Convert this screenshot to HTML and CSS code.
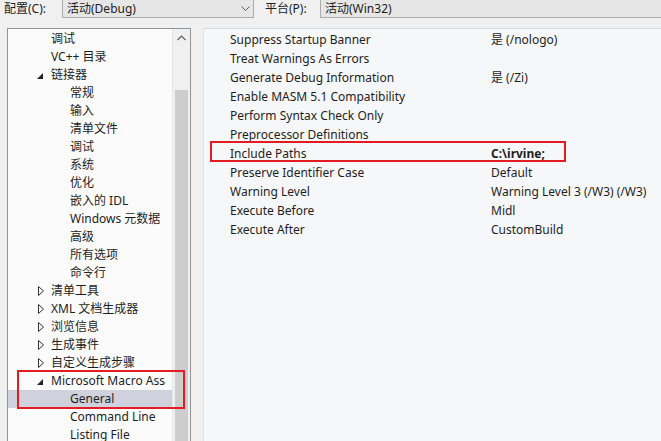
FILE: index.html
```html
<!DOCTYPE html>
<html lang="zh-CN">
<head>
  <meta charset="UTF-8">
  <title>属性页</title>
  <link rel="stylesheet" href="styles.css">
</head>
<body>
  <div class="toolbar">
    <span class="label">配置(C):</span>
    <div class="combo combo-config">
      <span>活动(Debug)</span>
      <svg class="chev" width="9" height="6" viewBox="0 0 9 6"><polyline points="0.5,0.5 4.5,4.5 8.5,0.5" fill="none" stroke="#606060" stroke-width="1"/></svg>
    </div>
    <span class="label label-platform">平台(P):</span>
    <div class="combo combo-platform">
      <span>活动(Win32)</span>
    </div>
  </div>

  <div class="main">
    <div class="tree">
      <ul class="tree-list">
        <li class="row lvl1">调试</li>
        <li class="row lvl1">VC++ 目录</li>
        <li class="row lvl1"><svg class="exp" width="6" height="6" viewBox="0 0 6 6"><polygon points="6,0 6,6 0,6" fill="#222"/></svg>链接器</li>
        <li class="row lvl2">常规</li>
        <li class="row lvl2">输入</li>
        <li class="row lvl2">清单文件</li>
        <li class="row lvl2">调试</li>
        <li class="row lvl2">系统</li>
        <li class="row lvl2">优化</li>
        <li class="row lvl2">嵌入的 IDL</li>
        <li class="row lvl2">Windows 元数据</li>
        <li class="row lvl2">高级</li>
        <li class="row lvl2">所有选项</li>
        <li class="row lvl2">命令行</li>
        <li class="row lvl1"><svg class="col" width="6" height="10" viewBox="0 0 6 10"><polygon points="0.5,0.5 5.5,5 0.5,9.5" fill="none" stroke="#333" stroke-width="1"/></svg>清单工具</li>
        <li class="row lvl1"><svg class="col" width="6" height="10" viewBox="0 0 6 10"><polygon points="0.5,0.5 5.5,5 0.5,9.5" fill="none" stroke="#333" stroke-width="1"/></svg>XML 文档生成器</li>
        <li class="row lvl1"><svg class="col" width="6" height="10" viewBox="0 0 6 10"><polygon points="0.5,0.5 5.5,5 0.5,9.5" fill="none" stroke="#333" stroke-width="1"/></svg>浏览信息</li>
        <li class="row lvl1"><svg class="col" width="6" height="10" viewBox="0 0 6 10"><polygon points="0.5,0.5 5.5,5 0.5,9.5" fill="none" stroke="#333" stroke-width="1"/></svg>生成事件</li>
        <li class="row lvl1"><svg class="col" width="6" height="10" viewBox="0 0 6 10"><polygon points="0.5,0.5 5.5,5 0.5,9.5" fill="none" stroke="#333" stroke-width="1"/></svg>自定义生成步骤</li>
        <li class="row lvl1"><svg class="exp" width="6" height="6" viewBox="0 0 6 6"><polygon points="6,0 6,6 0,6" fill="#222"/></svg>Microsoft Macro Ass</li>
        <li class="row lvl2 selected">General</li>
        <li class="row lvl2">Command Line</li>
        <li class="row lvl2">Listing File</li>
      </ul>
      <div class="scrollbar">
        <div class="scroll-btn">
          <svg width="9" height="6" viewBox="0 0 9 6"><polyline points="0.5,5 4.5,1 8.5,5" fill="none" stroke="#606060" stroke-width="1.2"/></svg>
        </div>
        <div class="scroll-track"><div class="scroll-thumb"></div></div>
      </div>
      <div class="mark mark-tree"></div>
    </div>

    <div class="grid">
      <div class="prop"><span class="name">Suppress Startup Banner</span><span class="value">是 (/nologo)</span></div>
      <div class="prop"><span class="name">Treat Warnings As Errors</span><span class="value"></span></div>
      <div class="prop"><span class="name">Generate Debug Information</span><span class="value">是 (/Zi)</span></div>
      <div class="prop"><span class="name">Enable MASM 5.1 Compatibility</span><span class="value"></span></div>
      <div class="prop"><span class="name">Perform Syntax Check Only</span><span class="value"></span></div>
      <div class="prop"><span class="name">Preprocessor Definitions</span><span class="value"></span></div>
      <div class="prop"><span class="name">Include Paths</span><span class="value bold">C:\irvine;</span></div>
      <div class="prop"><span class="name">Preserve Identifier Case</span><span class="value">Default</span></div>
      <div class="prop"><span class="name">Warning Level</span><span class="value">Warning Level 3 (/W3) (/W3)</span></div>
      <div class="prop"><span class="name">Execute Before</span><span class="value">Midl</span></div>
      <div class="prop"><span class="name">Execute After</span><span class="value">CustomBuild</span></div>
      <div class="mark mark-grid"></div>
    </div>
  </div>
</body>
</html>
```

FILE: styles.css
```css
body {
  margin: 0;
  width: 661px;
  height: 441px;
  overflow: hidden;
  background: #f0f0f0;
  font-family: "Noto Sans", "Noto Sans CJK SC", sans-serif;
  font-size: 12px;
  color: #1e1e1e;
}
.toolbar {
  display: flex;
  align-items: center;
  height: 20px;
  margin-top: -2px;
  padding-left: 4px;
}
.label {
  width: 58px;
  white-space: nowrap;
}
.label-platform {
  margin-left: 11px;
  width: 55px;
}
.combo {
  display: flex;
  align-items: center;
  justify-content: space-between;
  height: 20px;
  box-sizing: border-box;
  border: 1px solid #acacac;
  background: #e6e6e6;
  padding: 0 3px 0 4px;
}
.combo-config {
  width: 192px;
}
.combo-platform {
  flex: 1;
  margin-right: -4px;
}
.chev {
  margin-top: 2px;
}
.main {
  display: flex;
  gap: 12px;
  margin-top: 10px;
  padding-left: 7px;
  height: 420px;
}
.tree {
  position: relative;
  display: flex;
  width: 184px;
  box-sizing: border-box;
  border: 1px solid #8f9499;
  border-bottom: none;
  background: #fbfbfb;
}
.tree-list {
  list-style: none;
  margin: 0;
  padding: 1px 0 0;
  flex: 1;
  overflow: hidden;
}
.row {
  position: relative;
  height: 18px;
  line-height: 18px;
  white-space: nowrap;
}
.lvl1 {
  padding-left: 43px;
}
.lvl2 {
  padding-left: 62px;
}
.exp {
  position: absolute;
  left: 29px;
  top: 7px;
}
.col {
  position: absolute;
  left: 30px;
  top: 4px;
}
.selected {
  background: #cfd2dd;
}
.scrollbar {
  width: 17px;
  display: flex;
  flex-direction: column;
  background: #f0f0f0;
  border-left: 1px solid #e6e6e6;
}
.scroll-btn {
  height: 18px;
  display: flex;
  align-items: center;
  justify-content: center;
}
.scroll-track {
  flex: 1;
  padding: 43px 2px 0;
}
.scroll-thumb {
  height: 100%;
  background: #cdcdcd;
}
.grid {
  position: relative;
  flex: 1;
  border-top: 1px solid #d9d9d9;
  border-left: 1px solid #e2e2e2;
  background: #f6f7f9;
  padding-top: 1px;
}
.prop {
  display: flex;
  height: 19px;
  line-height: 19px;
  white-space: nowrap;
}
.name {
  width: 261px;
  padding-left: 26px;
}
.bold {
  font-weight: bold;
}
.mark {
  position: absolute;
  border: 2px solid #e31b23;
  box-sizing: border-box;
}
.mark-tree {
  left: 9px;
  top: 341px;
  width: 168px;
  height: 39px;
}
.mark-grid {
  left: 6px;
  top: 112px;
  width: 356px;
  height: 21px;
}
```
